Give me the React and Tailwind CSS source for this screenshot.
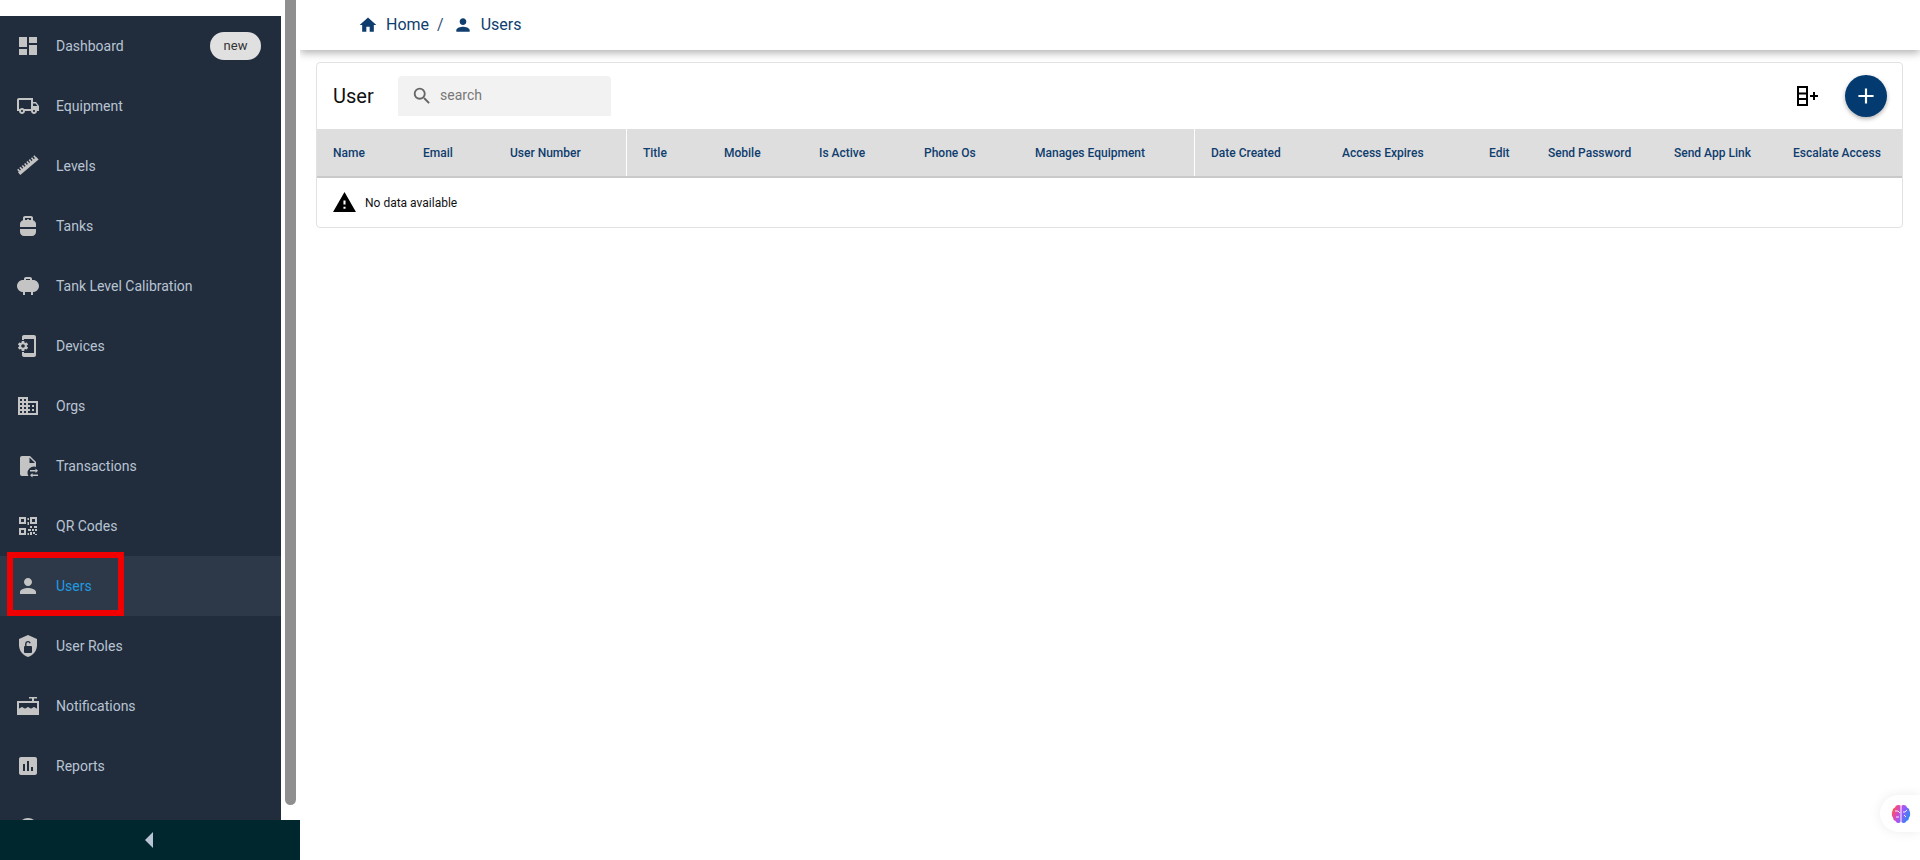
import React from 'react';
import {
  MdDashboard, MdOutlineLocalShipping, MdPropaneTank, MdPropane,
  MdPhonelinkSetup, MdDomain, MdPerson, MdAssessment, MdHome,
  MdSearch, MdWarning, MdAdd,
} from 'react-icons/md';

// Document with a small swap mark in the corner
const TransactionsIcon = () => (
  <svg width="24" height="24" viewBox="0 0 24 24" fill="currentColor">
    <path d="M6 2h8l6 6v14H6a2 2 0 0 1-2-2V4a2 2 0 0 1 2-2z" />
    <path d="M13.500 3.500V9h5.500z" fill="#212d3d" />
    <circle cx="18" cy="19" r="6.500" fill="#212d3d" />
    <path d="M14 16h5.500v-1.500l2.500 2.300-2.500 2.300v-1.500H14zM22 20.400h-5.500v-1.500L14 21.200l2.500 2.300V22H22z" />
  </svg>
);

const QrIcon = () => (
  <svg width="24" height="24" viewBox="0 0 24 24" fill="currentColor" fillRule="evenodd">
    <path d="M3 3h7v7H3zM5 5v3h3V5zM14 3h7v7h-7zM16 5v3h3V5zM3 14h7v7H3zM5 16v3h3v-3z" />
    <path d="M11.500 4H13v2h-1.500zM11.500 8H13v3h-1.500zM14 12h2v2h-2zM18 12h3v2h-3zM12 15h3v2h-3zM16 15h2v2h-2zM19 15h2v2h-2zM14 18h2v3h-2zM17 18h2v2h-2zM19 20h2v1h-2zM11.500 19H13v2h-1.500z" />
  </svg>
);

const ShieldLockIcon = () => (
  <svg width="24" height="24" viewBox="0 0 24 24" fill="currentColor">
    <path d="M12 1L3 5v6c0 5.55 3.84 10.74 9 12 5.16-1.26 9-6.45 9-12V5l-9-4z" />
    <rect x="8" y="12" width="8" height="7" rx="1" fill="#212d3d" />
    <path d="M9.800 12.500V9.800a2.200 2.200 0 0 1 4.300-.6" fill="none" stroke="#212d3d" strokeWidth="1.400" />
  </svg>
);

const TankIcon = () => (
  <svg width="24" height="24" viewBox="0 0 24 24" fill="currentColor">
    <path d="M13 3h8v1.500h-3V7h-2V4.500h-3z" />
    <path fillRule="evenodd" d="M1 7h22v14H1zM3 9v5.500c1.500 0 2-1.500 3-1.500s1.500 1.500 3 1.500 2-1.500 3-1.500 1.500 1.500 3 1.500 2-1.500 3-1.500 1.500 1.500 3 1.500V9z" />
  </svg>
);

const RulerIcon = () => (
  <svg width="24" height="24" viewBox="0 0 24 24" fill="currentColor">
    <g transform="translate(11.500 11) rotate(-40)">
      <rect x="-12" y="-0.500" width="24" height="3.500" />
      {[-11, -8, -5, -2, 1, 4, 7, 10].map((x) => (
        <rect key={x} x={x} y="-3" width="1.600" height="3" />
      ))}
    </g>
  </svg>
);

const ColumnAddIcon = () => (
  <svg width="24" height="24" viewBox="0 0 24 24" fill="none" stroke="#000" strokeWidth="2">
    <rect x="4" y="3" width="9" height="18" />
    <path d="M4 9.500h9M4 15h9" />
    <path d="M16 12h8M20 8v8" />
  </svg>
);

const BrainIcon = () => (
  <svg width="20" height="20" viewBox="0 0 20 20">
    <defs>
      <linearGradient id="brainFill" x1="0" y1="0" x2="1" y2="0.4">
        <stop offset="0" stopColor="#f97316" />
        <stop offset="0.3" stopColor="#ec4899" />
        <stop offset="0.6" stopColor="#a855f7" />
        <stop offset="1" stopColor="#3b82f6" />
      </linearGradient>
    </defs>
    <path fill="url(#brainFill)" d="M7 1a3 3 0 0 0-3 2.500A3.500 3.500 0 0 0 1.500 7 3.500 3.500 0 0 0 1 10a3.500 3.500 0 0 0 1 3.500A3.500 3.500 0 0 0 4.500 17 3 3 0 0 0 9.500 18V1.500A3 3 0 0 0 7 1zM13 1a3 3 0 0 1 3 2.500A3.500 3.500 0 0 1 18.500 7 3.500 3.500 0 0 1 19 10a3.500 3.500 0 0 1-1 3.500A3.500 3.500 0 0 1 15.500 17 3 3 0 0 1 10.500 18V1.500A3 3 0 0 1 13 1z" />
    <path d="M4 7h3l2 2M5 13h3M16 6l-2 2h-2M15 13l-2-2" fill="none" stroke="#fff" strokeWidth="0.9" />
  </svg>
);

const navItems = [
  { label: 'Dashboard', icon: <MdDashboard size={24} />, badge: 'new' },
  { label: 'Equipment', icon: <MdOutlineLocalShipping size={24} /> },
  { label: 'Levels', icon: <RulerIcon /> },
  { label: 'Tanks', icon: <MdPropaneTank size={24} /> },
  { label: 'Tank Level Calibration', icon: <MdPropane size={24} /> },
  { label: 'Devices', icon: <MdPhonelinkSetup size={24} /> },
  { label: 'Orgs', icon: <MdDomain size={24} /> },
  { label: 'Transactions', icon: <TransactionsIcon /> },
  { label: 'QR Codes', icon: <QrIcon /> },
  { label: 'Users', icon: <MdPerson size={24} />, active: true },
  { label: 'User Roles', icon: <ShieldLockIcon /> },
  { label: 'Notifications', icon: <TankIcon /> },
  { label: 'Reports', icon: <MdAssessment size={24} /> },
];

const columns = [
  { label: 'Name', first: true },
  { label: 'Email' },
  { label: 'User Number' },
  { label: 'Title', divider: true },
  { label: 'Mobile' },
  { label: 'Is Active' },
  { label: 'Phone Os' },
  { label: 'Manages Equipment' },
  { label: 'Date Created', divider: true },
  { label: 'Access Expires' },
  { label: 'Edit' },
  { label: 'Send Password' },
  { label: 'Send App Link' },
  { label: 'Escalate Access' },
];

const Sidebar = () => (
  <aside className="flex h-[860px] w-[300px] shrink-0 flex-col">
    <div className="flex min-h-0 flex-1">
      <div className="mt-4 w-[281px] overflow-hidden bg-[#212d3d]">
        {navItems.map((item) => (
          <div
            key={item.label}
            className={`flex h-[60px] items-center pl-4 pr-5 ${item.active ? 'bg-[#2d3949]' : ''}`}
          >
            <span className="flex w-6 justify-center text-[#c4c4c4]">{item.icon}</span>
            <span className={`ml-4 flex-1 text-sm ${item.active ? 'text-[#219be0]' : 'text-[#b9c4d3]'}`}>
              {item.label}
            </span>
            {item.badge && (
              <span className="flex h-7 w-[51px] items-center justify-center rounded-full bg-[#e0e0e0] text-[13px] text-[#333]">
                {item.badge}
              </span>
            )}
          </div>
        ))}
        {/* next row is cut off by the collapse bar */}
        <div className="flex h-[60px] items-center pl-[18px]">
          <span className="mt-1 h-5 w-5 rounded-full bg-[#c4c4c4]" />
        </div>
      </div>
      <div className="ml-1 h-[805px] w-[11px] rounded-b-md bg-[#8f8f8f]" />
    </div>
    <div className="flex h-10 items-center justify-center bg-[#00262e]">
      <svg width="10" height="16" viewBox="0 0 10 16" fill="#b9c4d3">
        <path d="M8 0v16L0 8z" />
      </svg>
    </div>
  </aside>
);

const TopBar = () => (
  <header className="flex h-[50px] items-center bg-white pl-[58px] text-base text-[#0f3d6e] shadow-[0_3px_8px_rgba(0,0,0,0.3)]">
    <MdHome size={20} />
    <span className="ml-[8px]">Home</span>
    <span className="ml-[8px] text-[#33527a]">/</span>
    <MdPerson size={20} className="ml-[9px]" />
    <span className="ml-[8px]">Users</span>
  </header>
);

const UserCard = () => (
  <section className="ml-4 mr-[17px] mt-3 rounded border border-[#e2e2e2] bg-white">
    <div className="flex h-[66px] items-center pl-4 pr-[15px]">
      <h1 className="w-[65px] text-xl text-[#111]">User</h1>
      <div className="flex h-10 w-[213px] items-center rounded-t bg-[#f2f2f2] pl-[13px]">
        <MdSearch size={22} className="text-[#666]" />
        <span className="mb-[2px] ml-[7px] text-sm text-[#777]">search</span>
      </div>
      <div className="ml-auto flex items-center gap-[27px]">
        <ColumnAddIcon />
        <button className="flex h-[42px] w-[42px] items-center justify-center rounded-full bg-[#033a70] text-white shadow-[0_2px_4px_rgba(0,0,0,0.3)]">
          <MdAdd size={26} />
        </button>
      </div>
    </div>
    <div className="grid h-[49px] grid-cols-[89px_87px_133px_81px_95px_105px_111px_176px_131px_147px_59px_126px_119px_1fr] border-b-2 border-[#c9c9c9] bg-[#dedede]">
      {columns.map((col) => (
        <div
          key={col.label}
          className={`flex items-center whitespace-nowrap text-xs font-medium text-[#0f3d6e] ${col.divider ? 'border-l border-white pl-4' : col.first ? 'pl-4' : 'pl-[17px]'}`}
        >
          {col.label}
        </div>
      ))}
    </div>
    <div className="flex h-[49px] items-center gap-[8px] pl-[15px] text-xs text-[#111]">
      <MdWarning size={25} className="text-black" />
      <span>No data available</span>
    </div>
  </section>
);

export default function App() {
  return (
    <div className="relative flex h-[860px] w-[1920px] overflow-hidden bg-white font-['Roboto',sans-serif]">
      <Sidebar />
      <main className="min-w-0 flex-1 overflow-hidden">
        <TopBar />
        <UserCard />
      </main>

      {/* red annotation around the active row */}
      <div className="absolute left-[7px] top-[552px] h-[64px] w-[117px] border-[6px] border-[#f00000]" />

      {/* floating assistant tab */}
      <div className="absolute right-0 top-[795px] flex h-[37px] w-[40px] items-center rounded-l-full bg-white pl-[11px] shadow-[0_0_12px_rgba(0,0,0,0.08)]">
        <BrainIcon />
      </div>
    </div>
  );
}
